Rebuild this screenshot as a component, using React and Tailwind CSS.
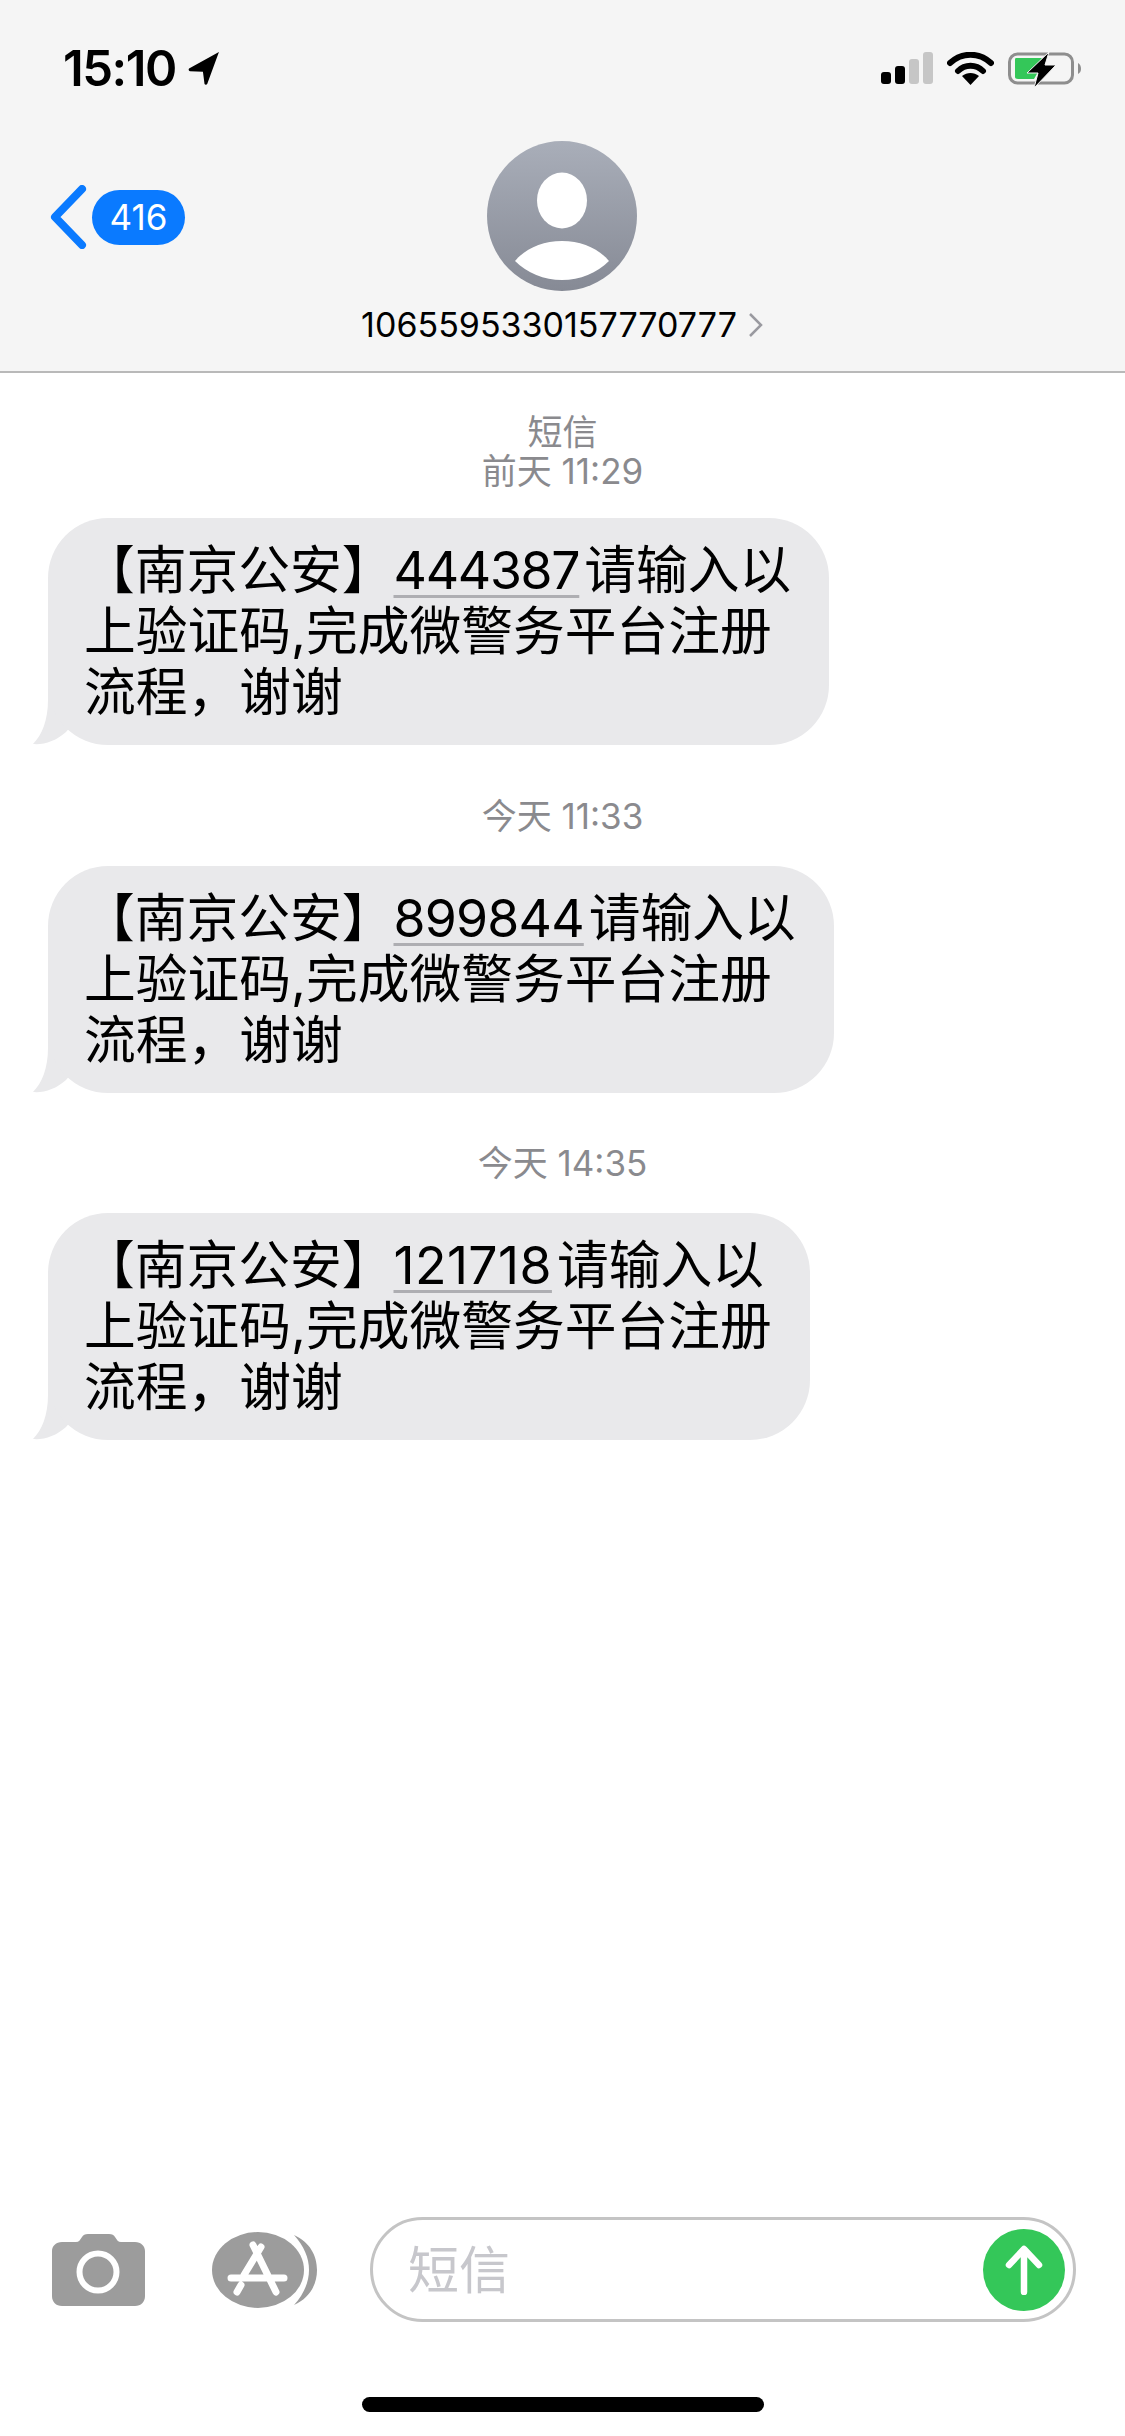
import React from "react";

const font = { fontFamily: 'Inter, "Noto Sans CJK SC", sans-serif' };

function Stamp({ children }) {
  return <p className="text-center text-[35px] leading-[39px] text-[#8a8a8e]">{children}</p>;
}

function Bubble({ code, spacing }) {
  return (
    <div className="relative w-fit ml-[48px]">
      <svg className="absolute left-[-16px] bottom-0 w-[40px] h-[60px]" viewBox="0 0 40 60">
        <path d="M16 0L16 15C16 35 10 50 1 59C12 60 24 56 34 47L40 40L40 0Z" fill="#e9e9eb" />
      </svg>
      <div className="relative rounded-[60px] bg-[#e9e9eb] pl-[36px] pr-[38px] pt-[22px] pb-[22px] text-[51.75px] leading-[61px] text-black whitespace-nowrap">
        <span className="ml-[-1px]">【南京公安】</span>
        <span className={spacing + " underline decoration-[3px] decoration-[#aeaeb2] underline-offset-[6px]"}>{code}</span>
        <span className="ml-[5px]">请输入以</span>
        <br />
        上验证码,完成微警务平台注册
        <br />
        流程，谢谢
      </div>
    </div>
  );
}

export default function App() {
  return (
    <div className="w-[1125px] h-[2436px] flex flex-col bg-white overflow-hidden" style={font}>
      <header className="h-[373px] shrink-0 bg-[#f5f5f5] border-b-[2px] border-[#b9b9b9]">
        <div className="h-[141px] flex justify-between pl-[63px] pr-[43px] pt-[46px]">
          <div className="flex items-start gap-[12px]">
            <span className="text-[49px] leading-[46px] font-semibold tracking-[-1.5px] text-black">15:10</span>
            <svg className="mt-[4px] w-[32px] h-[36px]" viewBox="0 0 30 32">
              <path d="M29 1L1 16.500C0 17.500 1 19 2 19L14 19.500L15.500 31C16 32 17.500 32 18 31Z" fill="#000" />
            </svg>
          </div>
          <div className="flex items-start gap-[14px] pt-[6px]">
            <svg className="w-[52px] h-[33px]" viewBox="0 0 52 33">
              <rect x="0" y="20" width="10" height="12" rx="3" fill="#000" />
              <rect x="14" y="14" width="10" height="18" rx="3" fill="#000" />
              <rect x="28" y="7" width="10" height="25" rx="3" fill="#c6c6c6" />
              <rect x="42" y="0" width="10" height="32" rx="3" fill="#c6c6c6" />
            </svg>
            <svg className="w-[47px] h-[33px]" viewBox="0 0 47 33">
              <path d="M3 11C15 0 32 0 44 11M11 19C18 12 29 12 36 19" fill="none" stroke="#000" strokeWidth="6" strokeLinecap="round" />
              <path d="M15 24C20 20 27 20 32 24L23.500 33Z" fill="#000" />
            </svg>
            <svg className="w-[74px] h-[36px]" viewBox="0 0 74 36">
              <rect x="1.500" y="2" width="63" height="29" rx="8" fill="none" stroke="#8e8e8e" strokeWidth="3" />
              <path d="M8 6H34L24 20H30L26 27H10C8 27 7 26 7 25V8C7 7 7 6 8 6Z" fill="#34c759" />
              <path d="M70 11C72 12 73 14 73 17C73 19 72 21 70 22Z" fill="#8e8e8e" />
              <path d="M41 0L19 21H30L26 36L48 13H37Z" fill="#000" stroke="#f5f5f5" strokeWidth="1" />
            </svg>
          </div>
        </div>
        <div className="grid grid-cols-[1fr_auto_1fr] items-start">
          <div className="flex items-center gap-[5px] pl-[49px] pt-[44px]">
            <svg className="w-[38px] h-[64px]" viewBox="0 0 38 64">
              <path d="M33 4L6 32L33 60" fill="none" stroke="#0a7aff" strokeWidth="8" strokeLinecap="round" strokeLinejoin="round" />
            </svg>
            <span className="w-[93px] h-[55px] rounded-full bg-[#0a7aff] text-center text-[35px] leading-[55px] text-white">416</span>
          </div>
          <div className="flex flex-col items-center">
            <svg className="w-[150px] h-[150px]" viewBox="0 0 150 150">
              <defs>
                <linearGradient id="face" x1="0" y1="0" x2="0" y2="1">
                  <stop offset="0" stopColor="#a9aeb9" />
                  <stop offset="1" stopColor="#868a95" />
                </linearGradient>
              </defs>
              <circle cx="75" cy="75" r="75" fill="url(#face)" />
              <ellipse cx="75" cy="59.500" rx="25" ry="28" fill="#fff" />
              <path d="M28 120C38 108 55 100 75 100C95 100 112 108 122 120C110 132 93 139 75 139C57 139 40 132 28 120Z" fill="#fff" />
            </svg>
            <div className="mt-[11px] flex items-center gap-[11px] text-[34px] leading-[46px] text-black">
              1065595330157770777
              <svg className="w-[16px] h-[26px]" viewBox="0 0 16 26">
                <path d="M2 2L13 13L2 24" fill="none" stroke="#9a9aa0" strokeWidth="2.500" />
              </svg>
            </div>
          </div>
          <div />
        </div>
      </header>

      <main className="flex-1 flex flex-col pt-[40px]">
        <Stamp>短信</Stamp>
        <Stamp>前天 11:29</Stamp>
        <div className="mt-[27px]"><Bubble code="444387" spacing="tracking-[-1.300px]" /></div>
        <div className="mt-[52px]"><Stamp>今天 11:33</Stamp></div>
        <div className="mt-[30px]"><Bubble code="899844" spacing="tracking-[-0.800px]" /></div>
        <div className="mt-[51px]"><Stamp>今天 14:35</Stamp></div>
        <div className="mt-[30px]"><Bubble code="121718" spacing="tracking-[0.400px]" /></div>
      </main>

      <footer className="shrink-0 flex flex-col items-center">
        <div className="w-full flex items-center pl-[52px] pr-[49px]">
          <svg className="w-[93px] h-[72px]" viewBox="0 0 93 72">
            <path d="M10 8H24C27 8 28 6 30 3C31 1 33 0 36 0H57C60 0 62 1 63 3C65 6 66 8 69 8H83C89 8 93 12 93 17V62C93 68 89 72 83 72H10C4 72 0 68 0 62V17C0 12 4 8 10 8Z" fill="#9c9c9c" />
            <circle cx="46" cy="38" r="18.500" fill="none" stroke="#fff" strokeWidth="6" />
          </svg>
          <svg className="ml-[67px] w-[106px] h-[76px]" viewBox="0 0 106 76">
            <ellipse cx="46" cy="38" rx="46" ry="38" fill="#9c9c9c" />
            <path d="M82 3C98 10 105 24 105 38C105 52 98 66 82 73C92 62 97 50 97 38C97 26 92 14 82 3Z" fill="#9c9c9c" />
            <path d="M41 13L64 60M49 15L32 43M19 46H72M29 53L25 60" fill="none" stroke="#fff" strokeWidth="7" strokeLinecap="round" />
          </svg>
          <div className="ml-[52px] flex-1 h-[105px] rounded-full border-[3px] border-[#c4c4c4] flex items-center justify-between pl-[35px] pr-[8px]">
            <span className="mt-[3px] text-[51px] text-[#c7c7cc]">短信</span>
            <span className="w-[82px] h-[82px] rounded-full bg-[#34c759] flex items-center justify-center">
              <svg className="w-[40px] h-[50px]" viewBox="0 0 40 50">
                <path d="M20 47V5M5 20L20 4L35 20" fill="none" stroke="#fff" strokeWidth="6.500" strokeLinecap="round" strokeLinejoin="round" />
              </svg>
            </span>
          </div>
        </div>
        <div className="mt-[75px] mb-[24px] w-[402px] h-[15px] rounded-full bg-black" />
      </footer>
    </div>
  );
}
